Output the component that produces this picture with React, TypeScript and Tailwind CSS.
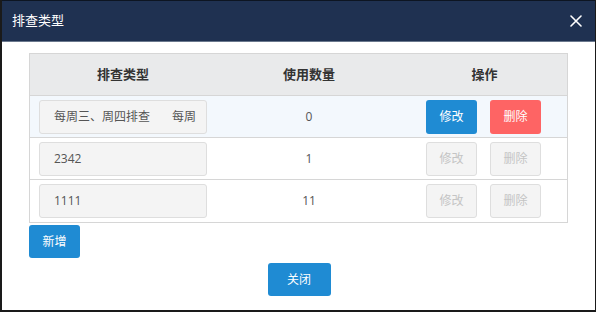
import React from 'react';

interface CheckType {
  id: number;
  name: string;
  extra?: string;
  count: number;
  active: boolean;
}

const rows: CheckType[] = [
  { id: 1, name: '每周三、周四排查', extra: '每周', count: 0, active: true },
  { id: 2, name: '2342', count: 1, active: false },
  { id: 3, name: '1111', count: 11, active: false },
];

const CloseIcon: React.FC = () => (
  <svg width="12" height="12" viewBox="0 0 12 12" fill="none">
    <path d="M1 1L11 11M11 1L1 11" stroke="#ffffff" strokeWidth="1.6" strokeLinecap="round" />
  </svg>
);

const App: React.FC = () => {
  return (
    <div className="w-[596px] h-[313px] bg-white" style={{ fontFamily: '"Open Sans", "Noto Sans CJK SC", sans-serif' }}>
      <div className="h-[312px] border-l-2 border-r border-b-2 border-[#1a1a1a] flex flex-col">
        <div className="h-[42px] bg-[#1f3151] border-t border-[#0d1522] border-b border-b-[#6a788d] flex items-center justify-between pl-[10px] pr-[13px]">
          <span className="text-[13px] text-white">排查类型</span>
          <CloseIcon />
        </div>

        <div className="mt-[11px] ml-[27px] w-[539px] border border-[#d6d6d6]">
          <div className="grid grid-cols-[186px_186px_1fr] h-[42px] bg-[#e9eaeb] border-b border-[#d6d6d6] items-center text-[13px] font-bold text-[#333]">
            <div className="text-center">排查类型</div>
            <div className="text-center">使用数量</div>
            <div className="text-center">操作</div>
          </div>
          {rows.map((row, i) => (
            <div
              key={row.id}
              className={`grid grid-cols-[186px_186px_1fr] h-[42px] items-center ${i < rows.length - 1 ? 'border-b border-[#d6d6d6]' : ''} ${row.active ? 'bg-[#f3f8fd]' : 'bg-white'}`}
            >
              <div className="pl-[9px]">
                <div className="w-[168px] h-[34px] bg-[#f4f4f4] border border-[#dedede] rounded-[3px] pl-[14px] flex items-center text-[12px] text-[#555]">
                  <span>{row.name}</span>
                  {row.extra && <span className="ml-[22px]">{row.extra}</span>}
                </div>
              </div>
              <div className="text-center text-[12px] text-[#555]">{row.count}</div>
              <div className="flex justify-center gap-[13px] pr-[2px]">
                {row.active ? (
                  <>
                    <button className="w-[51px] h-[34px] rounded-[3px] bg-[#1f8bd3] text-white text-[12px]">修改</button>
                    <button className="w-[51px] h-[34px] rounded-[3px] bg-[#fe6464] text-white text-[12px]">删除</button>
                  </>
                ) : (
                  <>
                    <button className="w-[51px] h-[34px] rounded-[3px] bg-[#f4f4f4] border border-[#dedede] text-[#c4c4c4] text-[12px]">修改</button>
                    <button className="w-[51px] h-[34px] rounded-[3px] bg-[#f4f4f4] border border-[#dedede] text-[#c4c4c4] text-[12px]">删除</button>
                  </>
                )}
              </div>
            </div>
          ))}
        </div>

        <div className="ml-[27px] mt-[2px]">
          <button className="w-[51px] h-[33px] rounded-[3px] bg-[#1f8bd3] text-white text-[12px]">新增</button>
        </div>
        <div className="flex justify-center mt-[5px] pl-[1px]">
          <button className="w-[63px] h-[33px] rounded-[3px] bg-[#1f8bd3] text-white text-[12px]">关闭</button>
        </div>
      </div>
    </div>
  );
};

export default App;
